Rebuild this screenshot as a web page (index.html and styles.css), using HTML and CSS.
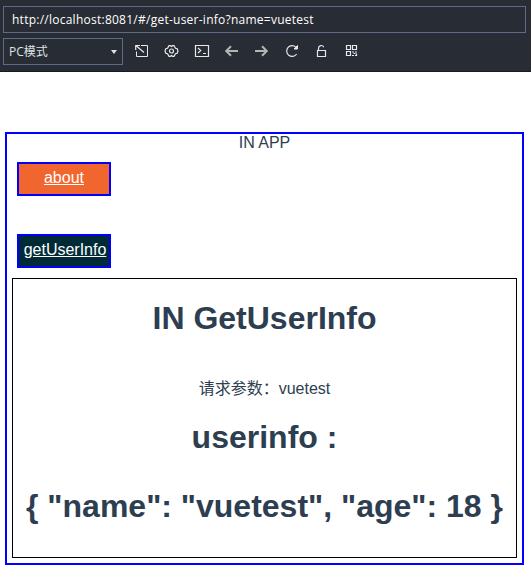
FILE: index.html
```html
<!DOCTYPE html>
<html lang="zh-CN">
<head>
<meta charset="utf-8">
<title>vuetest</title>
<link rel="stylesheet" href="styles.css">
</head>
<body>
<header class="browser">
  <div class="address"><span class="url">http://localhost:8081/#/get-user-info?name=vuetest</span></div>
  <div class="toolbar">
    <div class="mode"><span>PC模式</span><i class="caret"></i></div>
    <nav class="tools">
      <svg viewBox="0 0 16 16"><path d="M7 2.5h6.5v11h-11V8.5"/><path class="bold" d="M2.5 3l7.5 6.5M1.7 7V2.5H6"/></svg>
      <svg viewBox="0 0 16 16"><path class="bold" d="M5 2.7h1.5l1 .8 1-.8H10l1.5 2.5 1.7.6.8 2.2-.8 2.2-1.7.6-1.5 2.5H8.500l-1-.8-1 .8H5l-1.500-2.500-1.700-.6L1 8l.8-2.200 1.700-.6z"/><circle class="bold" cx="7.5" cy="8" r="2"/></svg>
      <svg viewBox="0 0 16 16"><path class="bold" d="M1.500 2.500h13v11h-13zM4 5l2.700 2.500L4 10M9 10.500h3"/></svg>
      <svg class="arrow" viewBox="0 0 16 16"><path d="M14 8H2.500M7 3.200L2.200 8 7 12.800"/></svg>
      <svg class="arrow" viewBox="0 0 16 16"><path d="M1 8h11.500M8 3.200L12.800 8 8 12.800"/></svg>
      <svg viewBox="0 0 16 16"><path class="bold" d="M12 4.300A5.400 5.400 0 1 0 12.600 11"/><path class="solid" d="M13.500 2.500v3.500H10z"/></svg>
      <svg viewBox="0 0 16 16"><path class="bold" d="M3.500 7.500h8v6h-8zM4.500 7.500V5.200a2.700 2.700 0 0 1 5.200-1"/></svg>
      <svg viewBox="0 0 16 16"><path class="bold" d="M2.500 2.500h4v4h-4zM8.500 2.500h4v4h-4zM2.500 8.500h4v4h-4zM8 9h2M11 9h2M9.500 10.500h2M8 12.500h2M12.500 10.500v2.500M11 12.500h2"/></svg>
    </nav>
  </div>
</header>
<main class="app">
  <div class="title">IN APP</div>
  <div class="link about"><a>about</a></div>
  <div class="link user"><a>getUserInfo</a></div>
  <section class="info">
    <h1>IN GetUserInfo</h1>
    <div class="params">请求参数：vuetest</div>
    <h1>userinfo :</h1>
    <h1>{ "name": "vuetest", "age": 18 }</h1>
  </section>
</main>
</body>
</html>
```
FILE: styles.css
```css
* { box-sizing: border-box; }
body {
  margin: 0;
  background: #fff;
  color: #2c3e50;
  font: 16px/18px "Liberation Sans", "Noto Sans CJK SC", sans-serif;
}
.browser {
  height: 72px;
  padding: 6px 5px 0 3px;
  background: #282c34;
  border-bottom: 1px solid #181a1f;
  color: #fff;
}
.address {
  height: 27px;
  padding-left: 8px;
  border: 1px solid #5f6b84;
  font: 12px/25px "Open Sans", sans-serif;
  letter-spacing: 0.25px;
}
.toolbar { display: flex; margin-top: 5px; }
.mode {
  display: flex;
  align-items: center;
  justify-content: space-between;
  width: 120px;
  height: 27px;
  padding: 0 5px;
  border: 1px solid #5f6b84;
  color: #dfe2e6;
  font: 12px/25px "Open Sans", "Noto Sans CJK SC", sans-serif;
}
.caret {
  border: 3px solid transparent;
  border-top: 4px solid #dfe2e6;
  border-bottom: 0;
}
.tools { display: flex; align-items: flex-start; gap: 14px; margin-left: 11px; padding-top: 5px; }
.tools svg {
  width: 16px;
  height: 16px;
  fill: none;
  stroke: #e6e8ea;
  stroke-width: 1;
}
.tools .bold { stroke-width: 1.2; }
.tools .arrow { stroke: #b4b4b4; stroke-width: 2; }
.tools .solid { fill: #e6e8ea; }
.app {
  width: 519px;
  height: 433px;
  margin: 60px 0 0 5px;
  padding: 0 5px;
  border: 2px solid #00f;
  text-align: center;
}
.title { height: 28px; }
.link {
  width: 94px;
  height: 34px;
  margin-left: 5px;
  border: 2px solid #00f;
  line-height: 28px;
  color: #fff;
  white-space: nowrap;
}
.link a { text-decoration: underline; }
.about { background: #f1662f; }
.user { margin-top: 38px; padding-left: 2px; background: #002b36; }
.info {
  height: 280px;
  margin-top: 10px;
  border: 1px solid #000;
}
h1 { margin: 0; font-size: 32px; line-height: 37px; }
.info h1:first-child { margin-top: 21px; }
.params { margin-top: 41px; line-height: 22px; }
.params + h1 { margin-top: 19px; }
.params + h1 + h1 { margin-top: 32px; white-space: nowrap; }
```
